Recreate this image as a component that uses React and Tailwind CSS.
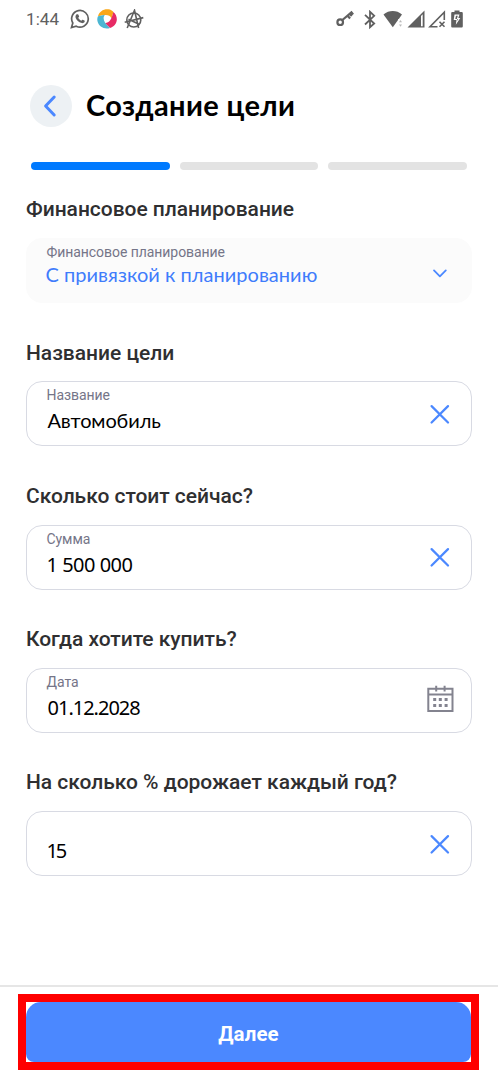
const BLUE = '#4b88ff';

function Cross() {
  return (
    <svg className="h-5 w-5" viewBox="0 0 20 20" fill="none" stroke={BLUE} strokeWidth="2.2" strokeLinecap="round">
      <path d="M1.600 2.100 18 18.500M18 2.100 1.600 18.500" />
    </svg>
  );
}

function Chevron() {
  return (
    <svg className="mt-1 h-5 w-5" viewBox="0 0 20 20" fill="none" stroke={BLUE} strokeWidth="1.8" strokeLinecap="round" strokeLinejoin="round">
      <path d="M4 7.400 9.900 13.300 15.800 7.400" />
    </svg>
  );
}

function Calendar() {
  return (
    <svg className="-mr-1 mb-[5px] h-7 w-7" viewBox="0 0 28 28" fill="none" stroke="#83838f" strokeWidth="2">
      <path d="M2.300 4.800H26.500V27H2.300ZM2.300 10.600H26.500M10.200 1.800V7.500M18.600 1.800V7.500" />
      <path strokeWidth="3" d="M7.200 15.400h3M12.800 15.400h3M18.600 15.400h3M7.200 21.400h3M12.800 21.400h3M18.600 21.400h3" />
    </svg>
  );
}

function Section({ title, label, value, valueClass, icon, muted }) {
  return (
    <section className="h-[143.25px] shrink-0">
      <h2 className="flex h-[26px] items-center whitespace-nowrap text-[21px] font-medium tracking-[-0.03px] text-[#2f2f31]">{title}</h2>
      <div className={`mt-[15px] flex h-[65px] items-center justify-between rounded-[16px] border pl-[19.5px] pr-[21px] ${muted ? 'border-[#fbfbfb] bg-[#fbfbfb]' : 'border-[#d8dae3] bg-white'}`}>
        <div className="flex h-full flex-col whitespace-nowrap pt-1">
          <span className="h-[19px] text-[14px] leading-[19px] tracking-[-0.06px] text-[#757588]">{label}</span>
          <span className={`leading-[28px] ${valueClass}`}>{value}</span>
        </div>
        {icon}
      </div>
    </section>
  );
}

function StatusBar() {
  return (
    <div className="flex h-10 shrink-0 items-center justify-between pl-[26px] pr-[34px] text-[#606060]">
      <div className="flex items-center">
        <span className="w-[44px] whitespace-nowrap text-[17px] tracking-[0.1px]">1:44</span>
        <svg className="h-5 w-5 -translate-y-px" viewBox="0 0 20 20" fill="none" stroke="currentColor" strokeWidth="1.7">
          <path d="M1.500 18.500 2.800 14A8.300 8.300 0 1 1 6.200 17.200Z" />
          <path fill="currentColor" stroke="none" d="M6.800 5.300h1.100c.3 0 .4.2.5.4l.7 1.600c.1.3 0 .5-.9 1.500.8 1.500 1.800 2.400 3.200 3 .9-1.100 1-1.300 1.400-1.100l1.600.8c.5.2.4 1 .1 1.600-.5.9-1.700 1.300-2.700 1-3.300-.9-5.300-3.200-6.100-5.200-.5-1.400 0-3.100 1.100-3.600Z" />
        </svg>
        <svg className="ml-[7px] h-5 w-5 -translate-y-px" viewBox="0 0 20 20">
          <path fill="#f9a719" d="M1 7.200C2.200 2.500 6.600-.3 11.500.3c2 .3 3.700 1.200 5 2.700L14.500 9.500C12.500 5.400 9 5.400 1 7.200Z" />
          <path fill="#e72b65" d="M16.400 3C20.400 6.300 21 12.300 17.700 16.100c-1.300 1.500-2.900 2.400-4.700 2.900L7.800 14C12 14.300 14.600 10.500 16.400 3Z" />
          <path fill="#4cb6d2" d="M1 7.200 8 5.800C5 9 7 14.500 13 19 7.500 20.900 1.700 17.700.5 12.300.1 10.400.2 8.700 1 7.200Z" />
        </svg>
        <svg className="ml-[7px] h-5 w-5 -translate-y-px" viewBox="0 0 20 20" fill="none" stroke="currentColor" strokeWidth="1.6">
          <circle cx="9.800" cy="11" r="7" />
          <path d="M3.200 19 10.500 1.300 14.600 19M.7 13.200 19.300 8.600M4.500 10.200 15.600 15.500" />
        </svg>
      </div>
      <div className="flex items-center">
        <svg className="mb-0.5 h-5 w-5" viewBox="0 0 20 20" fill="none" stroke="currentColor" strokeWidth="2.2">
          <circle cx="4.200" cy="13.200" r="2.800" />
          <path d="M6.400 11 15.400 3.300l1.700 2.200M11.600 6.800l2.500 2.700M14 4.900l1.800 2" />
        </svg>
        <svg className="ml-[7px] h-5 w-4" viewBox="0 0 16 20" fill="none" stroke="currentColor" strokeWidth="1.8">
          <path d="m2 4.800 9.200 8.700L7 17.200V1.800l4.200 4-9.200 8.700" />
        </svg>
        <svg className="ml-[4px] h-5 w-[22px]" viewBox="0 0 22 20" fill="currentColor">
          <path d="M.5 4.500C6-.1 13.500-.1 19 4.500L9.800 17.200Z" />
          <path fill="white" d="M15.200 9h6v9h-6Z" />
          <path fill="#b9b9b9" d="m16 12.200 1.500-2.200 1.500 2.200ZM16 14.500h3l-1.500 2.200Z" />
        </svg>
        <svg className="ml-[2px] h-5 w-[19px]" viewBox="0 0 19 20" fill="currentColor">
          <path d="M.5 17.500 17.500.5V17.500Z" />
          <path fill="white" d="M14 6 15.700 4.300V16.200H14Z" />
        </svg>
        <svg className="ml-[2px] h-5 w-[20px]" viewBox="0 0 20 20" fill="none" stroke="currentColor" strokeWidth="1.6">
          <path d="M9.500 16.700H2L16.300 2.300V10M11.500 11.800l5 5M16.500 11.800l-5 5" />
        </svg>
        <svg className="ml-[3px] mr-px h-5 w-3" viewBox="0 0 12 20" fill="currentColor">
          <path d="M3.500.5h5V2h2c.8 0 1.300.5 1.300 1.300v12.900c0 .8-.5 1.300-1.300 1.300h-9c-.8 0-1.300-.5-1.300-1.300V3.300C.2 2.500.7 2 1.500 2h2Z" />
          <path fill="white" d="M3.500 4.500h5L7.300 8h2L4.800 14.800l.7-4.800H2.700Z" />
          <path d="M5 5.700h1.800l-1 3.200h1.500l-1.400 2.200.4-2.100H4.300Z" />
        </svg>
      </div>
    </div>
  );
}

export default function App() {
  return (
    <div className="flex h-[1080px] w-[498px] flex-col overflow-hidden bg-white font-['Roboto',sans-serif]">
      <StatusBar />
      <header className="mt-[45px] flex h-[42px] shrink-0 items-center pl-[30px]">
        <button className="flex h-[42px] w-[42px] items-center justify-center rounded-full bg-[#edf1f4]">
          <svg className="h-6 w-6" viewBox="0 0 24 24" fill="none" stroke={BLUE} strokeWidth="3" strokeLinecap="round" strokeLinejoin="round">
            <path d="M15.200 3 6.600 12l8.600 9" />
          </svg>
        </button>
        <h1 className="ml-[14px] whitespace-nowrap pb-[3px] font-['Lato','Noto_Sans',sans-serif] text-[29px] font-bold leading-[39px] tracking-[0.35px] text-black">Создание цели</h1>
      </header>
      <div className="mt-[35px] grid h-2 shrink-0 grid-cols-3 gap-[10px] px-[31px]">
        <div className="rounded-full bg-[#007aff]" />
        <div className="rounded-full bg-[#e3e3e3]" />
        <div className="rounded-full bg-[#e3e3e3]" />
      </div>
      <main className="mt-[27px] flex h-[788px] shrink-0 flex-col px-[26px]">
        <Section muted title="Финансовое планирование" label="Финансовое планирование" value="С привязкой к планированию" valueClass="-ml-px -mt-[2px] font-['Lato','Noto_Sans',sans-serif] text-[20px] tracking-[0.03px] text-[#3f7cfb]" icon={<Chevron />} />
        <Section title="Название цели" label="Название" value="Автомобиль" valueClass="pl-px pt-px font-['Lato','Noto_Sans',sans-serif] text-[20px] tracking-[-0.1px] text-black" icon={<Cross />} />
        <Section title="Сколько стоит сейчас?" label="Сумма" value="1 500 000" valueClass="pt-[2px] font-['Noto_Sans',sans-serif] text-[20px] tracking-[-0.5px] text-black" icon={<Cross />} />
        <Section title="Когда хотите купить?" label="Дата" value="01.12.2028" valueClass="pl-px pt-[2px] font-['Noto_Sans',sans-serif] text-[20px] tracking-[-1px] text-black" icon={<Calendar />} />
        <Section title="На сколько % дорожает каждый год?" label="" value="15" valueClass="pt-[2px] font-['Noto_Sans',sans-serif] text-[20px] tracking-[-2.2px] text-black" icon={<Cross />} />
      </main>
      <footer className="flex h-[95px] shrink-0 border-t-2 border-[#e6e6e6] pl-[18px] pr-[19px] pt-[7px]">
        <div className="h-[76px] w-full border-8 border-[#ff0000] bg-white">
          <button className="flex h-[60px] w-full items-center justify-center rounded-t-[15px] rounded-b-[8px] bg-[#4b88ff] pt-[4px] text-[20.5px] font-bold tracking-[0.1px] text-white">Далее</button>
        </div>
      </footer>
    </div>
  );
}
